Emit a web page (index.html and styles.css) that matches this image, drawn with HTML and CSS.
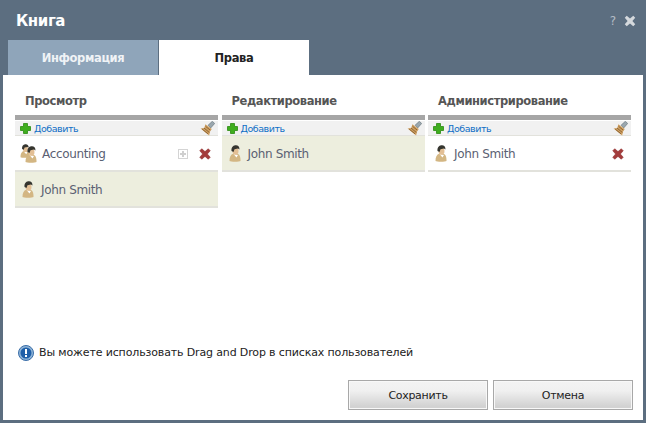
FILE: index.html
```html
<!DOCTYPE html>
<html lang="ru">
<head>
<meta charset="utf-8">
<title>Книга</title>
<link rel="stylesheet" href="styles.css">
</head>
<body>
<svg class="defs" width="0" height="0" aria-hidden="true">
  <defs>
    <symbol id="plus" viewBox="0 0 11 11">
      <path d="M3.500 .5h4v3h3v4h-3v3h-4v-3h-3v-4h3z" fill="#3fae1e" stroke="#2b8a12" stroke-width=".8"/>
    </symbol>
    <symbol id="brush" viewBox="0 0 14 14">
      <path d="M7.500 4 11.500 .3 13.700 2.300 10 6.500z" fill="#9aa7ae" stroke="#66737b" stroke-width=".6"/>
      <path d="M5 3 11 7.500 9.500 9.500 8.500 13.500 .5 7 4 6.500z" fill="#cfa062"/>
      <path d="M2 7.500l5.500 4.500M3.700 6.500l5 4.200M5.200 5l4.300 3.500" stroke="#8a6232" stroke-width=".9" fill="none"/>
    </symbol>
    <symbol id="del" viewBox="0 0 11 11">
      <path d="M.7 2.500 2.500 .7 5.500 3.300 8.500 .7 10.300 2.500 7.700 5.500 10.300 8.500 8.500 10.300 5.500 7.700 2.500 10.300 .7 8.500 3.300 5.500z" fill="#a33b3b" stroke="#8e2e2e" stroke-width=".5"/>
    </symbol>
    <symbol id="user" viewBox="0 0 12 17">
      <path d="M.5 16c0-4 1-6.500 4-7.500h3.500c3 1 3.500 3.500 3.500 7.500-1 1-10 1-11 0z" fill="#d3b683"/>
      <path d="M4.500 9l3 3.500L9 10z" fill="#fff"/>
      <ellipse cx="6.500" cy="6" rx="3" ry="3.800" fill="#e3bf95"/>
      <path d="M2.500 6C2 1.500 5 .3 7 .3s3.700 1.500 3.500 4.200L9 3.500 5.500 4.200 4.500 7z" fill="#35352f"/>
    </symbol>
  </defs>
</svg>
<main class="dialog">
  <header class="titlebar">
    <h1 class="title">Книга</h1>
    <div class="win-actions">
      <span class="help">?</span>
      <svg class="close" viewBox="0 0 11 11"><path d="M.7 2.500 2.500 .7 5.500 3.300 8.500 .7 10.300 2.500 7.700 5.500 10.300 8.500 8.500 10.300 5.500 7.700 2.500 10.300 .7 8.500 3.300 5.500z" fill="#d5d9dd"/></svg>
    </div>
  </header>
  <nav class="tabs">
    <a class="tab tab-off">Информация</a>
    <a class="tab tab-on">Права</a>
  </nav>
  <section class="panel">
    <div class="columns">
      <div class="col">
        <h2 class="col-title">Просмотр</h2>
        <div class="rule"></div>
        <div class="toolbar">
          <svg class="ico-plus"><use href="#plus"/></svg>
          <a class="add">Добавить</a>
          <svg class="ico-brush"><use href="#brush"/></svg>
        </div>
        <div class="row">
          <span class="group-ico">
            <svg class="ico-user back"><use href="#user"/></svg>
            <svg class="ico-user front"><use href="#user"/></svg>
          </span>
          <span class="name name-group">Accounting</span>
          <span class="expand"></span>
          <svg class="ico-del"><use href="#del"/></svg>
        </div>
        <div class="row row-sel">
          <svg class="ico-user"><use href="#user"/></svg>
          <span class="name">John Smith</span>
        </div>
      </div>
      <div class="col">
        <h2 class="col-title">Редактирование</h2>
        <div class="rule"></div>
        <div class="toolbar">
          <svg class="ico-plus"><use href="#plus"/></svg>
          <a class="add">Добавить</a>
          <svg class="ico-brush"><use href="#brush"/></svg>
        </div>
        <div class="row row-sel">
          <svg class="ico-user"><use href="#user"/></svg>
          <span class="name">John Smith</span>
        </div>
      </div>
      <div class="col">
        <h2 class="col-title">Администрирование</h2>
        <div class="rule"></div>
        <div class="toolbar">
          <svg class="ico-plus"><use href="#plus"/></svg>
          <a class="add">Добавить</a>
          <svg class="ico-brush"><use href="#brush"/></svg>
        </div>
        <div class="row">
          <svg class="ico-user"><use href="#user"/></svg>
          <span class="name">John Smith</span>
          <svg class="ico-del push"><use href="#del"/></svg>
        </div>
      </div>
    </div>
    <p class="hint">
      <svg class="ico-info" viewBox="0 0 16 16">
        <circle cx="8" cy="8" r="7.500" fill="#8fb4d8" stroke="#3a6ea8"/>
        <circle cx="8" cy="8" r="5.500" fill="#1f5fa8"/>
        <rect x="7" y="4" width="2" height="5" fill="#fff"/>
        <rect x="7" y="10" width="2" height="2" fill="#fff"/>
      </svg>
      Вы можете использовать Drag and Drop в списках пользователей
    </p>
    <div class="buttons">
      <button class="btn" type="button">Сохранить</button>
      <button class="btn" type="button">Отмена</button>
    </div>
  </section>
</main>
</body>
</html>
```
FILE: styles.css
```css
* { box-sizing: border-box; }
html, body { margin: 0; height: 100%; }
body {
  background: #5c6e80;
  font-family: "DejaVu Sans", sans-serif;
  overflow: hidden;
}
.defs { position: absolute; }
.dialog { width: 646px; height: 423px; display: flex; flex-direction: column; padding: 0 3px; }
.titlebar { height: 40px; display: flex; align-items: center; justify-content: space-between; padding: 2px 7px 0 13px; flex: none; }
.title { margin: 0; font-size: 15px; font-weight: bold; color: #fff; letter-spacing: -.4px; }
.win-actions { display: flex; align-items: center; gap: 8px; }
.help { color: #b4bcc5; font-size: 12px; }
.close { width: 12px; height: 12px; }
.tabs { display: flex; height: 35px; gap: 1px; padding-left: 5px; flex: none; }
.tab {
  width: 150px; display: flex; align-items: center; justify-content: center;
  font-size: 11.500px; font-weight: bold; letter-spacing: -.35px;
}
.tab-off { background: #8fa5ba; color: #f0f3f6; }
.tab-on { background: #fff; color: #222; }
.panel { background: #fff; height: 345px; flex: none; padding: 0 12px; display: flex; flex-direction: column; }
.columns { display: flex; gap: 3.500px; height: 254px; flex: none; }
.col { width: 203px; flex: none; }
.col-title { margin: 0; height: 40px; padding: 19px 0 0 10px; font-size: 11.500px; line-height: 15px; font-weight: bold; color: #555; letter-spacing: -.4px; }
.rule { height: 5px; background: #a6a6a6; }
.toolbar {
  margin-top: 1px; height: 15px; background: #f1f1f1; border-bottom: 1px solid #e2e2dc;
  display: flex; align-items: center; padding: 0 3px 0 5px;
}
.ico-plus { width: 11px; height: 11px; flex: none; }
.add { margin-left: 3px; font-size: 9.500px; color: #0f6fc6; letter-spacing: -.45px; }
.ico-brush { width: 15px; height: 15px; margin-left: auto; flex: none; }
.row {
  height: 36px; display: flex; align-items: center; padding: 1px 7px 0 7px;
  border-bottom: 2px solid #e2e2dc; background: #fff;
}
.row-sel { background: #edeede; }
.ico-user { width: 12px; height: 17px; flex: none; }
.group-ico { position: relative; width: 17px; height: 17px; flex: none; margin-left: -2px; }
.group-ico .back { position: absolute; left: 0; top: -1px; width: 10px; height: 14px; }
.group-ico .front { position: absolute; left: 5px; top: 1px; }
.name { margin-left: 7px; font-size: 12px; color: #5a6072; letter-spacing: -.35px; }
.name-group { margin-left: 5px; }
.expand {
  margin-left: auto; width: 10px; height: 10px; border: 1px solid #d4d4d4; position: relative;
  background: linear-gradient(#cfcfcf,#cfcfcf) center/6px 2px no-repeat, linear-gradient(#cfcfcf,#cfcfcf) center/2px 6px no-repeat;
}
.ico-del { width: 12px; height: 12px; flex: none; margin-left: 11px; }
.ico-del.push { margin-left: auto; }
.hint { margin: 0; height: 51px; flex: none; padding: 16px 0 0 3px; display: flex; align-items: flex-start; font-size: 11px; line-height: 16px; color: #222; letter-spacing: -.14px; }
.ico-info { width: 16px; height: 16px; margin-right: 5px; flex: none; }
.buttons { display: flex; justify-content: flex-end; gap: 5px; margin-right: -2px; }
.btn {
  width: 140px; height: 30px; border: 1px solid #a8a8a8; padding: 0;
  background: linear-gradient(#f3f3f3, #f0f0f0 35%, #d2d2d2 90%);
  box-shadow: inset 0 0 0 1px #f8f8f8;
  font-family: inherit; font-size: 11px; color: #222; letter-spacing: -.3px;
}
```
